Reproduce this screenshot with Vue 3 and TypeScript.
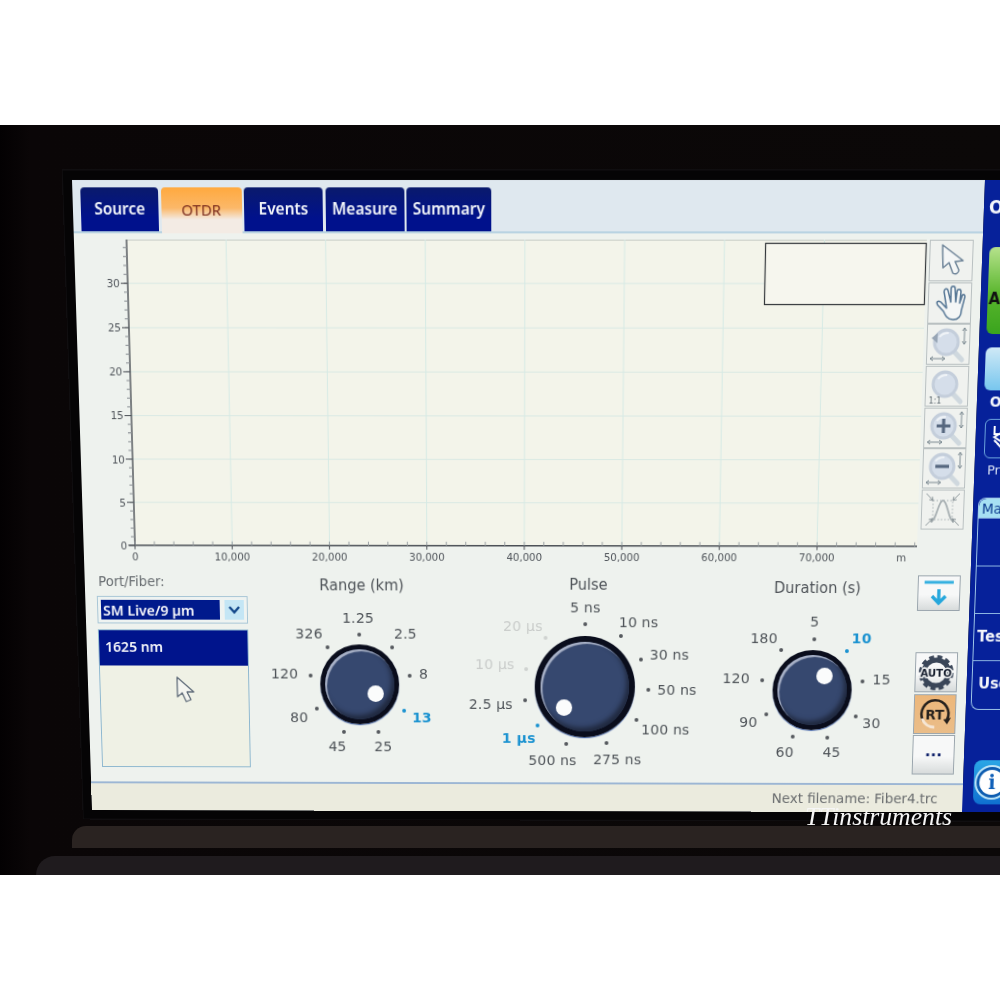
<script setup lang="ts">
  type Stop = { text: string; lx: number; ly: number; dx: number; dy: number; kind?: 'on' | 'off' };
  type Dial = { title: string; width: number; pad: number; cy: number; radius: number; face: number; knobX: number; knobY: number; stops: Stop[] };

  const scale = 1.04;
  const tabs = ['Source', 'OTDR', 'Events', 'Measure', 'Summary'];
  const tabWidths = [78, 81, 79, 79, 85];
  const tools = ['arrow', 'hand', 'fit', 'one', 'plus', 'minus', 'peak'];

  const yTicks = [0, 5, 10, 15, 20, 25, 30];
  const xTicks = [0, 1, 2, 3, 4, 5, 6, 7];
  const axisY = 300.8;
  const unitY = 8.62;
  const stepX = 100.2;
  const minorY = Array.from({ length: 34 }, (_, i) => axisY - (i + 1) * unitY);
  const minorX = Array.from({ length: 41 }, (_, i) => 53 + i * 20.04);

  const dials: Dial[] = [
    {
      title: 'Range (km)', width: 230, pad: 7, cy: 92, radius: 41, face: 31, knobX: 16, knobY: 9,
      stops: [
        { text: '1.25', lx: -1, ly: -65, dx: 0, dy: -49 },
        { text: '2.5', lx: 46, ly: -50, dx: 33, dy: -37 },
        { text: '8', lx: 64, ly: -11, dx: 50, dy: -9 },
        { text: '13', lx: 62, ly: 33, dx: 44, dy: 26, kind: 'on' },
        { text: '25', lx: 23, ly: 62, dx: 18, dy: 47 },
        { text: '45', lx: -23, ly: 62, dx: -16, dy: 47 },
        { text: '80', lx: -61, ly: 33, dx: -43, dy: 24 },
        { text: '120', lx: -75, ly: -11, dx: -49, dy: -9 },
        { text: '326', lx: -50, ly: -50, dx: -32, dy: -37 },
      ],
    },
    {
      title: 'Pulse', width: 238, pad: 6, cy: 95, radius: 52, face: 41, knobX: -21, knobY: 21,
      stops: [
        { text: '5 ns', lx: 0, ly: -78, dx: 0, dy: -62 },
        { text: '10 ns', lx: 53, ly: -63, dx: 36, dy: -50 },
        { text: '30 ns', lx: 84, ly: -32, dx: 56, dy: -27 },
        { text: '50 ns', lx: 92, ly: 3, dx: 63, dy: 3 },
        { text: '100 ns', lx: 81, ly: 42, dx: 52, dy: 33 },
        { text: '275 ns', lx: 33, ly: 72, dx: 22, dy: 56 },
        { text: '500 ns', lx: -32, ly: 73, dx: -18, dy: 57 },
        { text: '1 µs', lx: -66, ly: 51, dx: -47, dy: 38, kind: 'on' },
        { text: '2.5 µs', lx: -94, ly: 17, dx: -60, dy: 13 },
        { text: '10 µs', lx: -90, ly: -22, dx: -59, dy: -17, kind: 'off' },
        { text: '20 µs', lx: -62, ly: -60, dx: -39, dy: -48, kind: 'off' },
      ],
    },
    {
      title: 'Duration (s)', width: 234, pad: 9, cy: 95, radius: 41, face: 31, knobX: 12, knobY: -14,
      stops: [
        { text: '5', lx: 1, ly: -67, dx: 1, dy: -50 },
        { text: '10', lx: 48, ly: -51, dx: 34, dy: -38, kind: 'on' },
        { text: '15', lx: 69, ly: -11, dx: 50, dy: -9 },
        { text: '30', lx: 60, ly: 33, dx: 44, dy: 26 },
        { text: '45', lx: 21, ly: 62, dx: 16, dy: 47 },
        { text: '60', lx: -26, ly: 62, dx: -18, dy: 46 },
        { text: '90', lx: -63, ly: 32, dx: -45, dy: 24 },
        { text: '120', lx: -76, ly: -12, dx: -50, dy: -10 },
        { text: '180', lx: -49, ly: -51, dx: -32, dy: -39 },
      ],
    },
  ];

  const place = (dial: Dial, x: number, y: number) => ({
    left: `calc(50% + ${x * scale}px)`,
    top: `${dial.cy + y * scale}px`,
  });
  const circle = (r: number) => ({ width: `${r * 2}px`, height: `${r * 2}px` });
</script>

<template>
  <div class="page">
    <div class="margin"></div>
    <div class="photo">
      <div class="ledge"></div>
      <div class="ledge lower"></div>
      <div class="screen">
        <div class="main">
          <div class="tabs">
            <div
              v-for="(tab, i) in tabs"
              :key="tab"
              class="tab"
              :class="{ active: tab === 'OTDR' }"
              :style="{ width: tabWidths[i] + 'px' }"
            >
              {{ tab }}
            </div>
          </div>

          <div class="chart-row">
            <svg class="chart" width="858" height="323" viewBox="0 0 858 323">
              <rect x="53" y="0" width="804" :height="axisY" fill="#f3f4ea" />
              <line x1="53" y1="0.5" x2="857" y2="0.5" stroke="#c9cec8" />
              <line
                v-for="t in yTicks.slice(1)"
                :key="'gy' + t"
                x1="53"
                :y1="axisY - t * unitY"
                x2="857"
                :y2="axisY - t * unitY"
                stroke="#d9e9e4"
              />
              <line
                v-for="t in xTicks.slice(1)"
                :key="'gx' + t"
                :x1="53 + t * stepX"
                y1="0"
                :x2="53 + t * stepX"
                :y2="axisY"
                stroke="#d6eae5"
              />
              <line x1="53" y1="0" x2="53" :y2="axisY" stroke="#4a4f55" stroke-width="1.4" />
              <line x1="47" :y1="axisY" x2="857" :y2="axisY" stroke="#4a4f55" stroke-width="1.4" />
              <line
                v-for="(y, i) in minorY"
                :key="'my' + i"
                x1="49"
                :y1="y"
                x2="53"
                :y2="y"
                stroke="#8b9095"
              />
              <line
                v-for="(x, i) in minorX"
                :key="'mx' + i"
                :x1="x"
                :y1="axisY - 4"
                :x2="x"
                :y2="axisY"
                stroke="#9aa0a4"
              />
              <g v-for="t in yTicks" :key="'ly' + t">
                <line x1="46" :y1="axisY - t * unitY" x2="53" :y2="axisY - t * unitY" stroke="#4a4f55" />
                <text class="tick" x="45" :y="axisY - t * unitY + 4" text-anchor="end">{{ t }}</text>
              </g>
              <g v-for="t in xTicks" :key="'lx' + t">
                <line :x1="53 + t * stepX" :y1="axisY" :x2="53 + t * stepX" :y2="axisY + 4" stroke="#4a4f55" />
                <text class="tick" :x="53 + t * stepX" y="316" text-anchor="middle">
                  {{ t === 0 ? '0' : t * 10 + ',000' }}
                </text>
              </g>
              <text class="tick" x="841" y="316" text-anchor="middle">m</text>
              <rect x="695.5" y="3.5" width="161" height="59" fill="#f6f6ee" stroke="#33373b" stroke-width="1.2" />
            </svg>

            <div class="tools">
              <div v-for="tool in tools" :key="tool" class="tool">
                <svg width="42" height="38" viewBox="0 0 42 38" fill="none">
                  <template v-if="tool === 'arrow'">
                    <path d="M12 4 L13 26 L19 21 L23 31 C26 33 29 31 29 28 L25 20 L33 19 Z" fill="#f4f6f6" stroke="#6f8599" stroke-width="1.5" stroke-linejoin="round" />
                  </template>
                  <template v-else-if="tool === 'hand'">
                    <path d="M9 21 L15 27 C17 31 19 35 25 35 C31 35 33 31 33 26 L36 13 C36 10 33 10 33 13 L31 19 L32 8 C32 5 28 5 28 8 L27 18 L26 5 C26 2 22 2 22 5 L22 18 L19 7 C18 4 15 5 15 8 L18 24 L12 18 C9 16 7 18 9 21 Z" fill="#f4f6f6" stroke="#587896" stroke-width="1.5" stroke-linejoin="round" />
                  </template>
                  <template v-else-if="tool === 'peak'">
                    <rect x="11" y="10" width="20" height="19" stroke="#a9b2b4" stroke-dasharray="1.5 2" />
                    <path d="M9 31 C15 31 16 10 21 10 C26 10 27 31 33 31" stroke="#a7afb2" stroke-width="1.8" />
                    <path d="M4 3 L11 10 M38 3 L31 10 M4 35 L11 28 M38 35 L31 28" stroke="#8f999d" />
                    <path d="M11 10 L10 6 M11 10 L7 9 M31 10 L32 6 M31 10 L35 9 M11 28 L10 32 M11 28 L7 29 M31 28 L32 32 M31 28 L35 29" stroke="#8f999d" />
                  </template>
                  <template v-else>
                    <line x1="26" y1="25" x2="35" y2="34" stroke="#cfd8de" stroke-width="5" stroke-linecap="round" />
                    <circle cx="19" cy="17" r="12" fill="#d5deea" stroke="#c4cedb" stroke-width="3" />
                    <path d="M12 12 C14 9 18 8 21 8" stroke="#eef2f6" stroke-width="2" />
                    <path v-if="tool === 'plus'" d="M12 17 H26 M19 10 V24" stroke="#56677f" stroke-width="3.2" />
                    <path v-if="tool === 'minus'" d="M12 17 H26" stroke="#56677f" stroke-width="3.2" />
                    <path v-if="tool === 'fit'" d="M4 13 L10 8 V18 Z" fill="#97a5b5" />
                    <text v-if="tool === 'one'" class="one" x="3" y="36">1:1</text>
                    <template v-if="tool !== 'one'">
                      <path d="M37 3 V19 M35 6 L37 3 L39 6 M35 16 L37 19 L39 16" stroke="#7c8a92" />
                      <path d="M3 33 H18 M6 31 L3 33 L6 35 M15 31 L18 33 L15 35" stroke="#7c8a92" />
                    </template>
                  </template>
                </svg>
              </div>
            </div>
          </div>

          <div class="controls">
            <div class="port">
              <div class="port-label">Port/Fiber:</div>
              <div class="select">
                <span class="select-value">SM Live/9 µm</span>
                <span class="select-btn">
                  <svg width="14" height="10" viewBox="0 0 14 10" fill="none">
                    <path d="M2 2 L7 7.5 L12 2" stroke="#12478a" stroke-width="2.4" />
                  </svg>
                </span>
              </div>
              <div class="list">
                <div class="list-item">1625 nm</div>
                <svg class="pointer" width="22" height="30" viewBox="0 0 22 30">
                  <path d="M2 2 L2 22 L7 18 L11 27 L16 25 L12 17 L19 17 Z" fill="#f4f5f0" stroke="#5e6a78" stroke-width="1.3" stroke-linejoin="round" />
                </svg>
              </div>
            </div>

            <div v-for="dial in dials" :key="dial.title" class="dial" :style="{ paddingTop: dial.pad + 'px' }">
              <div class="dial-title">{{ dial.title }}</div>
              <div class="dial-canvas">
                <template v-for="stop in dial.stops" :key="stop.text">
                  <span class="stop-label" :class="stop.kind" :style="place(dial, stop.lx, stop.ly)">{{ stop.text }}</span>
                  <span class="stop-dot" :class="stop.kind" :style="place(dial, stop.dx, stop.dy)"></span>
                </template>
                <div class="knob" :style="[place(dial, 0, 0), circle(dial.radius)]">
                  <div class="knob-face" :style="circle(dial.face + 5)">
                    <span class="knob-dot" :style="{ left: `calc(50% + ${dial.knobX * scale}px)`, top: `calc(50% + ${dial.knobY * scale}px)` }"></span>
                  </div>
                </div>
              </div>
            </div>

            <div class="side">
              <div class="side-btn down">
                <svg width="34" height="30" viewBox="0 0 34 30" fill="none">
                  <path d="M2 4 H32" stroke="#35b0e0" stroke-width="3" />
                  <path d="M17 11 V25 M10 18 L17 25 L24 18" stroke="#25a7dc" stroke-width="3.4" />
                </svg>
              </div>
              <div class="side-stack">
                <div class="side-btn square">
                  <svg width="40" height="38" viewBox="0 0 40 38">
                    <circle cx="20" cy="19" r="13" fill="none" stroke="#3a4658" stroke-width="5" />
                    <circle cx="20" cy="19" r="16" fill="none" stroke="#3a4658" stroke-width="4" stroke-dasharray="5 3.4" />
                    <text class="auto" x="20" y="23.5" text-anchor="middle">AUTO</text>
                  </svg>
                </div>
                <div class="side-btn square rt">
                  <svg width="40" height="38" viewBox="0 0 40 38" fill="none">
                    <path d="M8 26 A14 14 0 1 1 33 25" stroke="#26211d" stroke-width="2.6" />
                    <path d="M29 25 L33 30 L37 23 Z" fill="#26211d" />
                    <path d="M7 24 A14 14 0 0 0 20 33" stroke="#f5e6d5" stroke-width="3" />
                    <text class="rt-text" x="20" y="25" text-anchor="middle">RT</text>
                  </svg>
                </div>
                <div class="side-btn square more">...</div>
              </div>
            </div>
          </div>

          <div class="status">Next filename: Fiber4.trc</div>
        </div>

        <div class="panel">
          <div class="panel-title">OTDR</div>
          <div class="start">Auto</div>
          <div class="light"></div>
          <div class="panel-label">Off</div>
          <div class="outline">
            <svg width="20" height="36" viewBox="0 0 20 36" fill="none">
              <path d="M8 6 V14 H16 M16 22 L8 17 L16 12 M8 20 L16 28" stroke="#ffffff" stroke-width="2" />
            </svg>
          </div>
          <div class="panel-label small">Print</div>
          <div class="menu">
            <div class="menu-head">Main</div>
            <div class="menu-row"></div>
            <div class="menu-row">T</div>
            <div class="menu-row">Test</div>
            <div class="menu-row">User</div>
          </div>
          <div class="info"><span>i</span></div>
        </div>
      </div>
      <div class="mark">TTinstruments</div>
    </div>
    <div class="margin"></div>
  </div>
</template>

<style>
  html,
  body {
    margin: 0;
    background: #ffffff;
    overflow: hidden;
  }
</style>

<style scoped>
  .page {
    width: 1000px;
    height: 1000px;
    display: flex;
    flex-direction: column;
    font-family: 'DejaVu Sans', sans-serif;
  }
  .margin {
    height: 125px;
    background: #ffffff;
  }
  .photo {
    position: relative;
    height: 750px;
    overflow: hidden;
    background: linear-gradient(90deg, #030102 0, #0a0607 30px, #0b0808 100%);
    padding: 55px 0 0 72px;
    box-sizing: border-box;
  }
  .ledge {
    position: absolute;
    left: 72px;
    right: 0;
    top: 701px;
    height: 22px;
    background: #2a2321;
    border-radius: 14px 0 0 0;
  }
  .ledge.lower {
    left: 36px;
    top: 731px;
    height: 19px;
    background: #1f1b1e;
    border-radius: 26px 0 0 0;
  }
  .screen {
    position: relative;
    width: 980px;
    height: 630px;
    display: flex;
    transform-origin: 0 0;
    transform: matrix3d(0.99668, 0, 0, -0.000003636, 0.03332, 1.04933, 0, 0.00007832, 0, 0, 1, 0, 0, 0, 0, 1);
    box-shadow: 0 0 0 9px #050405, 0 0 0 10px #100e10;
  }
  .main {
    width: 913px;
    height: 630px;
    flex: none;
    display: flex;
    flex-direction: column;
    background: #eef2ee;
    color: #4a4f55;
  }
  .tabs {
    height: 51px;
    box-sizing: border-box;
    padding: 7px 0 0 8px;
    display: flex;
    gap: 2.5px;
    background: #dfe8ef;
    border-bottom: 2px solid #b9d3e2;
  }
  .tab {
    box-sizing: border-box;
    display: flex;
    align-items: center;
    justify-content: center;
    border-radius: 4px 4px 0 0;
    background: linear-gradient(#0a1a6c, #00118c 70%);
    color: #f3f6fa;
    font-family: 'Noto Sans', sans-serif;
    font-weight: 600;
    font-size: 15.5px;
    padding-bottom: 3px;
  }
  .tab.active {
    background: linear-gradient(#ffa93e, #fbb869 45%, #f3ebe4 70%);
    color: #7d2f1f;
    font-weight: 400;
    font-size: 15px;
    margin-bottom: -2px;
  }
  .chart-row {
    height: 331px;
    box-sizing: border-box;
    padding-top: 6px;
    display: flex;
    align-items: flex-start;
  }
  .chart {
    flex: none;
  }
  .tick {
    font-family: 'DejaVu Sans', sans-serif;
    font-size: 10.5px;
    fill: #50555b;
  }
  .tools {
    margin: 0 0 0 2px;
    display: flex;
    flex-direction: column;
    gap: 0.7px;
  }
  .tool {
    width: 44px;
    height: 40px;
    box-sizing: border-box;
    border: 1px solid #b9c0c1;
    background: #f0f2ef;
  }
  .tool svg {
    display: block;
  }
  .one {
    font-family: 'DejaVu Sans', sans-serif;
    font-size: 8px;
    fill: #5e6a70;
  }
  .controls {
    height: 218px;
    display: grid;
    grid-template-columns: 156px 230px 238px 234px 44px;
    padding-left: 12px;
  }
  .port {
    display: flex;
    flex-direction: column;
    padding-top: 3px;
  }
  .port-label {
    font-size: 13.5px;
    line-height: 18px;
    color: #666b6f;
    margin: 0 0 6px 2px;
  }
  .select {
    height: 28px;
    box-sizing: border-box;
    display: flex;
    gap: 5px;
    padding: 3px;
    border: 1px solid #a8c6d6;
    background: #eef3f1;
  }
  .select-value {
    flex: 1;
    background: #001a8c;
    color: #f5f6fa;
    font-size: 14.5px;
    line-height: 21px;
    font-weight: 600;
    font-family: 'Noto Sans', sans-serif;
    padding-left: 2px;
  }
  .select-btn {
    width: 20px;
    display: flex;
    align-items: center;
    justify-content: center;
    background: #c4e6f5;
  }
  .list {
    position: relative;
    margin-top: 6px;
    height: 142px;
    box-sizing: border-box;
    border: 1px solid #8db7cf;
    background: #eff1e5;
  }
  .list-item {
    height: 36px;
    background: #00148c;
    color: #f5f6fa;
    font-family: 'Noto Sans', sans-serif;
    font-weight: 600;
    font-size: 14.5px;
    line-height: 33px;
    padding-left: 6px;
  }
  .pointer {
    position: absolute;
    left: 78px;
    top: 46px;
  }
  .dial-title {
    height: 18px;
    line-height: 18px;
    text-align: center;
    font-size: 15px;
    color: #4d5257;
    padding-left: 6px;
  }
  .dial-canvas {
    position: relative;
    height: 180px;
  }
  .stop-label {
    position: absolute;
    transform: translate(-50%, -50%);
    font-size: 14.5px;
    letter-spacing: 0.2px;
    white-space: nowrap;
    color: #4e5358;
  }
  .stop-label.on {
    color: #1a92d0;
    font-weight: 700;
  }
  .stop-label.off {
    color: #c9ccca;
  }
  .stop-dot {
    position: absolute;
    width: 4px;
    height: 4px;
    margin: -2px 0 0 -2px;
    border-radius: 50%;
    background: #55595e;
  }
  .stop-dot.on {
    background: #1a92d0;
  }
  .stop-dot.off {
    background: #cfd2d0;
  }
  .knob {
    position: absolute;
    transform: translate(-50%, -50%);
    border-radius: 50%;
    display: flex;
    align-items: center;
    justify-content: center;
    background: radial-gradient(circle at 50% 50%, #0a0d1c 80%, #6a6e80 96%, #8b8fa0 100%);
    box-shadow: 0 1px 1px #3e5fa5;
  }
  .knob-face {
    position: relative;
    border-radius: 50%;
    background: #36486f;
    box-shadow: inset 2px 2px 1px #aab3c8, inset -3px -4px 5px #20293f;
  }
  .knob-dot {
    position: absolute;
    width: 17px;
    height: 17px;
    margin: -8.5px 0 0 -8.5px;
    border-radius: 50%;
    background: #fbfcfc;
  }
  .side {
    margin-left: -11px;
    display: flex;
    flex-direction: column;
    padding-top: 5px;
  }
  .side-btn {
    width: 44px;
    box-sizing: border-box;
    border: 1px solid #9aa5ad;
    display: flex;
    align-items: center;
    justify-content: center;
    background: linear-gradient(#f7f8f8 55%, #d7dbdb);
  }
  .side-btn.down {
    height: 36px;
  }
  .side-stack {
    margin-top: 42px;
    display: flex;
    flex-direction: column;
    gap: 1.5px;
  }
  .side-btn.square {
    height: 41px;
  }
  .side-btn.rt {
    background: linear-gradient(#edb77a, #eabd89);
  }
  .side-btn.more {
    color: #10226b;
    font-weight: 700;
    font-size: 16px;
    padding-bottom: 8px;
  }
  .auto {
    font-family: 'DejaVu Sans', sans-serif;
    font-size: 10.5px;
    font-weight: 700;
    fill: #141c2c;
    stroke: #f2f4f4;
    stroke-width: 3px;
    paint-order: stroke;
  }
  .rt-text {
    font-family: 'DejaVu Sans', sans-serif;
    font-size: 14px;
    font-weight: 700;
    fill: #26211d;
  }
  .status {
    flex: 1;
    box-sizing: border-box;
    border-top: 2px solid #9cb6d4;
    background: #ebebde;
    text-align: right;
    font-size: 14px;
    line-height: 28px;
    padding-right: 26px;
    color: #696c6e;
  }
  .panel {
    flex: 1;
    display: flex;
    flex-direction: column;
    background: #06219a;
    color: #f5f7fb;
    font-weight: 700;
    font-size: 15px;
    white-space: nowrap;
    overflow: hidden;
  }
  .panel-title {
    margin: 16px 0 0 5px;
    height: 20px;
    line-height: 20px;
    font-size: 17px;
  }
  .start {
    margin: 28px 0 0 7px;
    height: 84px;
    width: 60px;
    box-sizing: border-box;
    padding: 41px 0 0 1px;
    border-radius: 6px;
    background: linear-gradient(#b6e28c, #58b52c 55%, #3aa41e);
    color: #111;
    font-size: 15px;
  }
  .light {
    margin: 13px 0 0 7px;
    width: 60px;
    height: 42px;
    border-radius: 6px;
    background: linear-gradient(#cfe9f6, #77c6ee);
  }
  .panel-label {
    margin: 2px 0 0 13px;
    height: 18px;
    line-height: 18px;
    font-size: 14px;
  }
  .panel-label.small {
    font-weight: 400;
    color: #d9e2f5;
    font-size: 13px;
    margin-top: 3px;
  }
  .outline {
    margin: 8px 0 0 9px;
    width: 60px;
    height: 39px;
    box-sizing: border-box;
    border: 1.5px solid #6aa2dc;
    border-radius: 6px;
    padding-left: 1px;
  }
  .menu {
    margin: 18px 0 0 5px;
    width: 70px;
    box-sizing: border-box;
    border: 1.5px solid #9fc7e8;
    border-right: 0;
    border-radius: 8px 0 0 8px;
    overflow: hidden;
  }
  .menu-head {
    height: 19px;
    line-height: 20px;
    padding-left: 3px;
    background: #a6e0f3;
    color: #0c3b8e;
    font-weight: 400;
    font-size: 14px;
    border-radius: 8px 0 0 0;
  }
  .menu-row {
    height: 48px;
    box-sizing: border-box;
    line-height: 46px;
    padding-left: 3px;
    border-top: 1.5px solid #8db6e2;
    font-size: 15px;
  }
  .menu-row:nth-child(3) {
    padding-left: 26px;
  }
  .menu-row:last-child {
    height: 50px;
    padding-left: 6px;
  }
  .info {
    margin: 52px 0 0 11px;
    width: 62px;
    height: 46px;
    border-radius: 8px;
    background: linear-gradient(#2ba7e6, #0f6fd0);
    display: flex;
    align-items: center;
    padding-left: 6px;
  }
  .info span {
    width: 26px;
    height: 26px;
    border-radius: 50%;
    background: #ffffff;
    color: #0f5fb8;
    font-family: 'DejaVu Serif', serif;
    font-size: 20px;
    line-height: 26px;
    text-align: center;
    box-shadow: 0 0 0 3px #0d5cb0, 0 0 0 5px #bfe6f8;
  }
  .mark {
    position: absolute;
    left: 805px;
    top: 679px;
    font-family: 'Liberation Serif', serif;
    font-style: italic;
    font-size: 25.7px;
    line-height: 26px;
    color: #f6f6f6;
    white-space: nowrap;
  }
</style>
